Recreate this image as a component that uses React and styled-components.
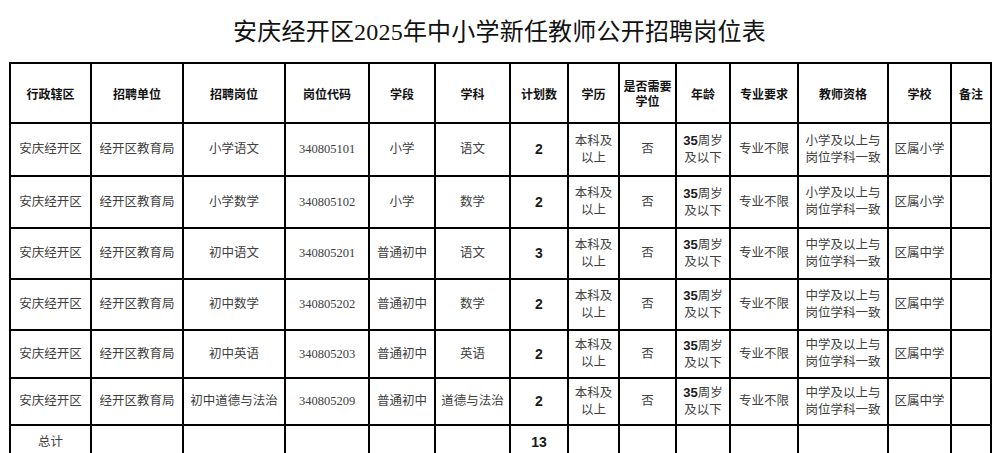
import React from "react";
import styled, { createGlobalStyle } from "styled-components";

const GlobalStyle = createGlobalStyle`
  html, body {
    margin: 0;
    padding: 0;
    background: #fff;
    overflow: hidden;
  }
  body {
    font-family: "Liberation Serif", "Noto Sans CJK SC", serif;
  }
`;

const Page = styled.div`
  width: 1002px;
  height: 453px;
  overflow: hidden;
  padding: 0 12px 0 9px;
  box-sizing: border-box;
`;

const Title = styled.h1`
  margin: 0;
  height: 62px;
  display: flex;
  align-items: center;
  justify-content: center;
  padding-bottom: 3px;
  box-sizing: border-box;
  font-family: "Liberation Serif", "Noto Sans CJK SC", serif;
  font-size: 24px;
  font-weight: 400;
  color: #111;
  letter-spacing: 0.2px;
`;

const Sheet = styled.table`
  width: 981px;
  border-collapse: collapse;
  table-layout: fixed;
`;

const HeadRow = styled.tr`
  height: 60px;
`;

const TotalRow = styled.tr`
  height: 34px;
`;

const HeadCell = styled.th`
  border: 2px solid #000;
  padding: 0;
  font-family: "Noto Sans CJK SC", sans-serif;
  font-size: 12px;
  font-weight: 700;
  line-height: 15px;
  color: #111;
  text-align: center;
  vertical-align: middle;
  white-space: pre-line;
`;

const Cell = styled.td`
  border: 2px solid #000;
  padding: 0 2px;
  text-align: center;
  vertical-align: middle;
  white-space: pre-line;
  color: #404040;
  line-height: 17px;
  font-family: ${(p) =>
    p.$num
      ? '"Liberation Sans", sans-serif'
      : '"Liberation Serif", "Noto Sans CJK SC", serif'};
  font-size: ${(p) => (p.$num ? "14px" : "12.5px")};
  font-weight: ${(p) => (p.$num ? 700 : 400)};
  ${(p) => p.$num && "color: #1a1a1a;"}
`;

const Age = styled.span`
  font-family: "Liberation Sans", sans-serif;
  font-weight: 700;
  font-size: 13px;
  color: #1a1a1a;
`;

const widths = [81, 92, 102, 84, 66, 75, 58, 51, 57, 54, 68, 90, 63, 40];

const headers = [
  "行政辖区",
  "招聘单位",
  "招聘岗位",
  "岗位代码",
  "学段",
  "学科",
  "计划数",
  "学历",
  "是否需要\n学位",
  "年龄",
  "专业要求",
  "教师资格",
  "学校",
  "备注",
];

const rows = [
  { post: "小学语文", code: "340805101", stage: "小学", subject: "语文", count: 2, level: "小学", school: "区属小学", h: 53 },
  { post: "小学数学", code: "340805102", stage: "小学", subject: "数学", count: 2, level: "小学", school: "区属小学", h: 52 },
  { post: "初中语文", code: "340805201", stage: "普通初中", subject: "语文", count: 3, level: "中学", school: "区属中学", h: 51 },
  { post: "初中数学", code: "340805202", stage: "普通初中", subject: "数学", count: 2, level: "中学", school: "区属中学", h: 51 },
  { post: "初中英语", code: "340805203", stage: "普通初中", subject: "英语", count: 2, level: "中学", school: "区属中学", h: 48 },
  { post: "初中道德与法治", code: "340805209", stage: "普通初中", subject: "道德与法治", count: 2, level: "中学", school: "区属中学", h: 47 },
];

export default function App() {
  return (
    <Page>
      <GlobalStyle />
      <Title>安庆经开区2025年中小学新任教师公开招聘岗位表</Title>
      <Sheet>
        <colgroup>
          {widths.map((w, i) => (
            <col key={i} style={{ width: w }} />
          ))}
        </colgroup>
        <thead>
          <HeadRow>
            {headers.map((h) => (
              <HeadCell key={h}>{h}</HeadCell>
            ))}
          </HeadRow>
        </thead>
        <tbody>
          {rows.map((r) => (
            <tr key={r.code} style={{ height: r.h }}>
              <Cell>安庆经开区</Cell>
              <Cell>经开区教育局</Cell>
              <Cell>{r.post}</Cell>
              <Cell>{r.code}</Cell>
              <Cell>{r.stage}</Cell>
              <Cell>{r.subject}</Cell>
              <Cell $num>{r.count}</Cell>
              <Cell>{"本科及\n以上"}</Cell>
              <Cell>否</Cell>
              <Cell>
                <Age>35</Age>周岁{"\n"}及以下
              </Cell>
              <Cell>专业不限</Cell>
              <Cell>{`${r.level}及以上与\n岗位学科一致`}</Cell>
              <Cell>{r.school}</Cell>
              <Cell />
            </tr>
          ))}
          <TotalRow>
            <Cell>总计</Cell>
            <Cell />
            <Cell />
            <Cell />
            <Cell />
            <Cell />
            <Cell $num>13</Cell>
            <Cell />
            <Cell />
            <Cell />
            <Cell />
            <Cell />
            <Cell />
            <Cell />
          </TotalRow>
        </tbody>
      </Sheet>
    </Page>
  );
}
